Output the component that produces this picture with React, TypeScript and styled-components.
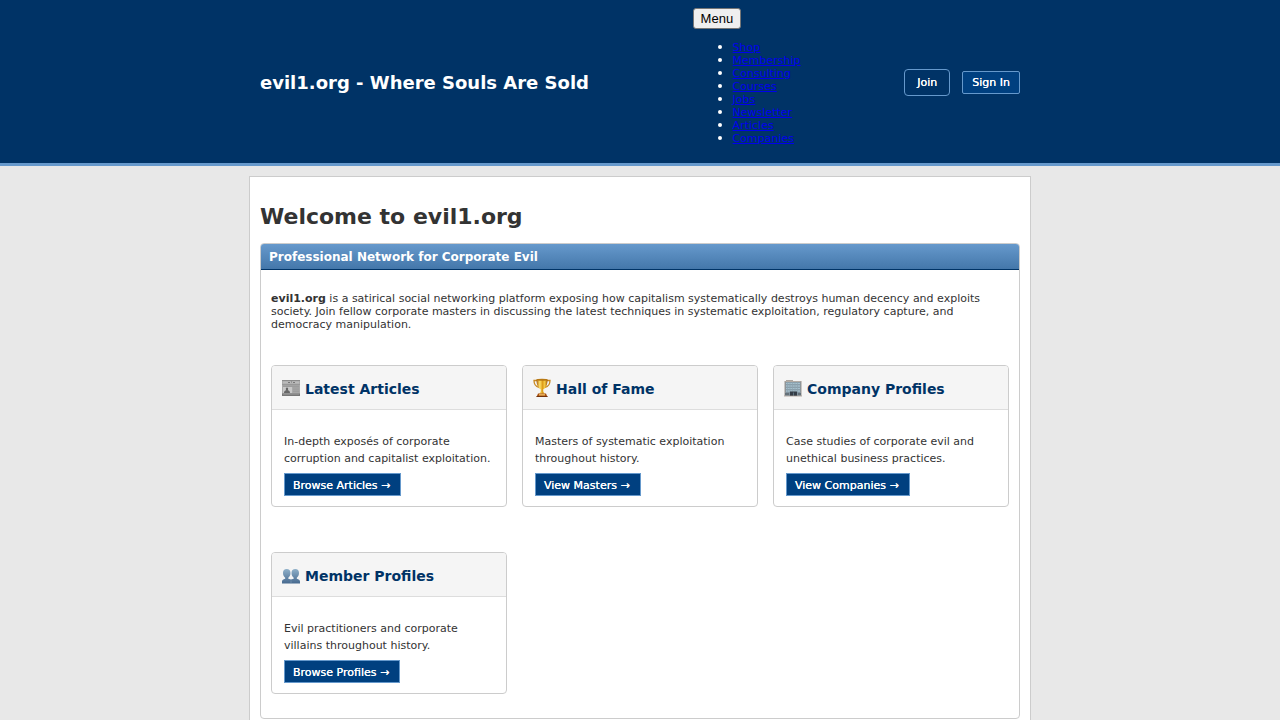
import React from "react";
import styled, { createGlobalStyle } from "styled-components";

const GlobalStyle = createGlobalStyle`
  *, *::before, *::after { box-sizing: border-box; }
  body {
    margin: 0;
    background: #e8e8e8;
    color: #333;
    font: 11px/13px Verdana, "DejaVu Sans", sans-serif;
  }
`;

const Header = styled.header`
  background: #003366;
  border-bottom: 3px solid #6699cc;
  color: #fff;
`;

const HeaderInner = styled.div`
  display: flex;
  align-items: center;
  justify-content: space-between;
  max-width: 780px;
  margin: 0 auto;
  padding: 8px 10px 7px;
`;

const SiteName = styled.div`
  padding-top: 2px;
  font-size: 18px;
  line-height: 22px;
  font-weight: bold;
`;

const MenuButton = styled.button`
  display: block;
  height: 21px;
  padding: 1px 7px;
  border: 1px solid #767676;
  border-radius: 3px;
  background: #efefef;
  color: #000;
  font: 13px/15px "Liberation Sans", Arial, sans-serif;
`;

const NavList = styled.ul`
  margin: 11px 0 12px;
  padding-left: 40px;

  li {
    height: 13px;
  }

  li::marker {
    font-size: 14px;
  }
`;

const NavLink = styled.a`
  color: #0000ee;
  text-decoration: underline;
`;

const Actions = styled.div`
  display: flex;
  align-items: center;
  gap: 12px;
`;

const ActionLink = styled.a<{ $outlined?: boolean }>`
  padding: ${(p) => (p.$outlined ? "6px 12px" : "4px 9px")};
  border: 1px solid #6699cc;
  border-radius: ${(p) => (p.$outlined ? "4px" : "2px")};
  background: ${(p) => (p.$outlined ? "transparent" : "#004080")};
  color: #fff;
  text-decoration: none;
  text-shadow: 0 0 0 #fff;
`;

const Main = styled.main`
  max-width: 782px;
  margin: 10px auto;
  padding: 10px;
  border: 1px solid #ccc;
  background: #fff;
`;

const PageTitle = styled.h1`
  margin: 16px 0 12px;
  font-size: 22px;
  line-height: 28px;
`;

const Panel = styled.section`
  border: 1px solid #ccc;
  border-radius: 4px;
  overflow: hidden;
`;

const PanelTitle = styled.h2`
  margin: 0;
  padding: 6px 8px 4px;
  border-bottom: 1px solid #003366;
  background: linear-gradient(#6699cc, #4477aa);
  color: #fff;
  font-size: 12px;
  line-height: 15px;
`;

const PanelBody = styled.div`
  padding: 22px 10px 24px;
`;

const Intro = styled.p`
  margin: 0 0 34px;
`;

const CardGrid = styled.div`
  display: grid;
  grid-template-columns: repeat(auto-fill, minmax(220px, 1fr));
  gap: 45px 15px;
`;

const Card = styled.article`
  border: 1px solid #ccc;
  border-radius: 4px;
  overflow: hidden;
`;

const CardHeader = styled.header`
  display: flex;
  align-items: center;
  gap: 5px;
  height: 44px;
  padding: 0 10px;
  border-bottom: 1px solid #ddd;
  background: #f5f5f5;
`;

const CardTitle = styled.h3`
  margin: 4px 0 0;
  color: #003366;
  font-size: 14px;
  line-height: 17px;
`;

const CardBody = styled.div`
  padding: 23px 12px 10px;
`;

const CardText = styled.p`
  margin: 0 0 6px;
  line-height: 17px;
`;

const CardLink = styled.a`
  display: inline-block;
  padding: 5px 10px 3px 8px;
  border: 1px solid #6699cc;
  background: #004080;
  color: #fff;
  text-decoration: none;
  text-shadow: 0 0 0 #fff;
`;

const Icon = styled.svg`
  flex: none;
  width: 18px;
  height: 20px;
`;

const NewspaperIcon = () => (
  <Icon viewBox="0 0 18 20" aria-hidden="true">
    <rect x="0" y="2" width="18" height="16" fill="#a9a9a9" />
    <rect x="0" y="2" width="18" height="1" fill="#8c8c8c" />
    <rect x="1" y="3.5" width="16" height="2" fill="#bbb" />
    <path d="M6 4.5h2M9 4h1M11 4.5h2" stroke="#777" strokeWidth="1" />
    <path d="M0 6.5h18M1 8.2h16" stroke="#909090" strokeWidth=".7" />
    <rect x="1" y="9" width="9" height="6" fill="#c8c8c8" />
    <path d="M2 15c0-2 1-2.500 2.200-2.800-.7-1.300-.4-2.700.8-2.700s1.500 1.400.8 2.700C7 12.500 8 13 8 15z" fill="#666" />
    <path d="M11 10h6M11 11.800h6M11 13.600h6" stroke="#999" strokeWidth=".8" />
    <rect x="0" y="15.500" width="18" height="2.500" fill="#777" />
    <path d="M1 16.300h16" stroke="#a0a0a0" strokeWidth=".6" />
  </Icon>
);

const TrophyIcon = () => (
  <Icon viewBox="0 0 18 20" aria-hidden="true">
    <defs>
      <linearGradient id="trophy-gold" x1="0" x2="1">
        <stop offset="0" stopColor="#a85d08" />
        <stop offset=".3" stopColor="#ffe36b" />
        <stop offset=".55" stopColor="#dd9c19" />
        <stop offset=".75" stopColor="#f6cc46" />
        <stop offset="1" stopColor="#9b5304" />
      </linearGradient>
    </defs>
    <path d="M4 2.500H1c0 3.500 1.500 6 5 7M14 2.500h3c0 3.500-1.500 6-5 7" fill="none" stroke="#c98a22" strokeWidth="1.300" />
    <path d="M3.500 1.500h11c0 5-1.200 8.500-4.200 9.800v2.200l1.500 2.300H6.200l1.500-2.300v-2.200C4.700 10 3.500 6.500 3.500 1.500z" fill="url(#trophy-gold)" />
    <ellipse cx="9" cy="1.800" rx="5.500" ry="1" fill="#b87914" />
    <path d="M5 15.500h8l1.500 3.500h-11z" fill="#a84f10" />
    <rect x="6" y="16" width="6" height="1.600" fill="#e6ac55" />
    <path d="M3.500 18.500h11" stroke="#71320c" />
  </Icon>
);

const BuildingIcon = () => (
  <Icon viewBox="0 -1 18 20" aria-hidden="true">
    <rect x="2" y="1" width="7" height="2" fill="#aaa49e" />
    <rect x="1" y="2" width="16" height="15" fill="#81939f" />
    <path d="M1 2.500h16" stroke="#b4aca5" />
    <path d="M2 4.500h14M2 7h14M2 9.500h14M2 12h14" stroke="#a5c0cd" strokeWidth="1.400" />
    <path d="M3.500 3v10M6 3v10M8.500 3v10M11 3v10M13.500 3v10" stroke="#8ea3af" strokeWidth=".7" />
    <path d="M1 2v15M17 2v15" stroke="#9b9692" />
    <rect x="6" y="12.500" width="7" height="4.500" fill="#343d47" />
    <path d="M1 15h4M14 15h3" stroke="#65717a" strokeWidth="2" />
    <path d="M9.500 13.500v3.500" stroke="#7893a3" strokeWidth=".6" />
    <path d="M0 17h18" stroke="#a49b92" strokeWidth=".8" />
  </Icon>
);

const PeopleIcon = () => (
  <Icon viewBox="0 0 18 20" aria-hidden="true">
    <defs>
      <linearGradient id="people-blue" x1="0" y1="0" x2="0" y2="1">
        <stop offset="0" stopColor="#8fb0c9" />
        <stop offset="1" stopColor="#46698f" />
      </linearGradient>
    </defs>
    <path d="M0 18.500v-2c0-1.600 1.300-2 3.200-2.700v-1C1.800 11.500 1 10 1 8 1 5.500 2.300 4 4.700 4S8.500 5.500 8.500 8c0 2-.8 3.500-2.200 4.800v1l2.700.8 2.700-.8v-1C10.300 11.500 9.500 10 9.500 8c0-2.500 1.400-4 3.800-4S17 5.500 17 8c0 2-.8 3.500-2.200 4.800v1c1.900.7 3.200 1.100 3.200 2.700v2z" fill="url(#people-blue)" />
    <path d="M9 15.500v3" stroke="#8eabc2" strokeWidth=".5" />
  </Icon>
);

const navItems = ["Shop", "Membership", "Consulting", "Courses", "Jobs", "Newsletter", "Articles", "Companies"];

const cards = [
  {
    title: "Latest Articles",
    icon: NewspaperIcon,
    text: "In-depth exposés of corporate corruption and capitalist exploitation.",
    link: "Browse Articles →",
  },
  {
    title: "Hall of Fame",
    icon: TrophyIcon,
    text: "Masters of systematic exploitation throughout history.",
    link: "View Masters →",
  },
  {
    title: "Company Profiles",
    icon: BuildingIcon,
    text: "Case studies of corporate evil and unethical business practices.",
    link: "View Companies →",
  },
  {
    title: "Member Profiles",
    icon: PeopleIcon,
    text: "Evil practitioners and corporate villains throughout history.",
    link: "Browse Profiles →",
  },
];

export default function App() {
  return (
    <>
      <GlobalStyle />
      <Header>
        <HeaderInner>
          <SiteName>evil1.org - Where Souls Are Sold</SiteName>
          <nav aria-label="Main">
            <MenuButton type="button">Menu</MenuButton>
            <NavList>
              {navItems.map((item) => (
                <li key={item}>
                  <NavLink href={`#${item.toLowerCase()}`}>{item}</NavLink>
                </li>
              ))}
            </NavList>
          </nav>
          <Actions>
            <ActionLink href="#join" $outlined>
              Join
            </ActionLink>
            <ActionLink href="#signin">Sign In</ActionLink>
          </Actions>
        </HeaderInner>
      </Header>
      <Main>
        <PageTitle>Welcome to evil1.org</PageTitle>
        <Panel>
          <PanelTitle>Professional Network for Corporate Evil</PanelTitle>
          <PanelBody>
            <Intro>
              <strong>evil1.org</strong> is a satirical social networking platform exposing how capitalism
              systematically destroys human decency and exploits society. Join fellow corporate masters in discussing
              the latest techniques in systematic exploitation, regulatory capture, and democracy manipulation.
            </Intro>
            <CardGrid>
              {cards.map(({ title, icon: CardIcon, text, link }) => (
                <Card key={title}>
                  <CardHeader>
                    <CardIcon />
                    <CardTitle>{title}</CardTitle>
                  </CardHeader>
                  <CardBody>
                    <CardText>{text}</CardText>
                    <CardLink href={`#${title.toLowerCase().replace(/ /g, "-")}`}>{link}</CardLink>
                  </CardBody>
                </Card>
              ))}
            </CardGrid>
          </PanelBody>
        </Panel>
      </Main>
    </>
  );
}
